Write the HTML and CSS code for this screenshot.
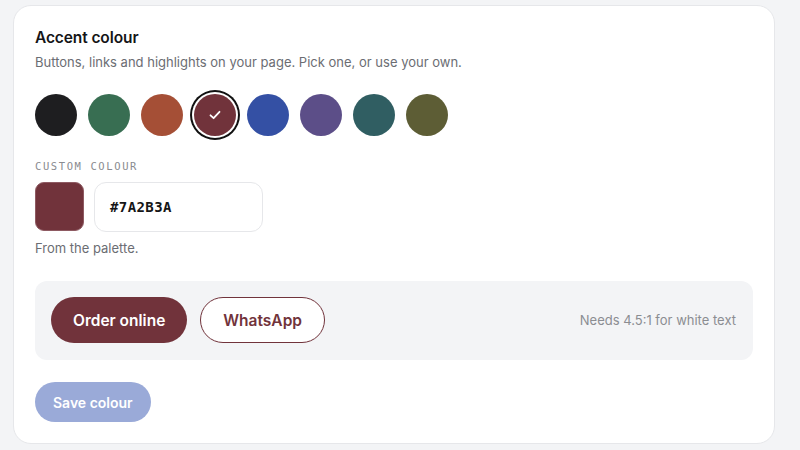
FILE: index.html
```html
<!DOCTYPE html>
<html lang="en">
<head>
    <meta charset="UTF-8">
    <meta name="viewport" content="width=device-width, initial-scale=1.0">
    <title>Accent colour</title>
    <link rel="stylesheet" href="styles.css">
</head>
<body>

    <div class="card">

        <h2 class="titlu">Accent colour</h2>
        <p class="descriere">Buttons, links and highlights on your page. Pick one, or use your own.</p>

        <div class="paleta">
            <div class="bulina" style="background-color: #1e1e20;"></div>
            <div class="bulina" style="background-color: #386e52;"></div>
            <div class="bulina" style="background-color: #a54f36;"></div>
            <div class="bulina selectata" style="background-color: #71333b;">
                <svg width="14" height="14" viewBox="0 0 14 14">
                    <path d="M2.5 7.3 L5.6 10.2 L11.5 3.8" fill="none" stroke="white" stroke-width="1.8" stroke-linecap="round" stroke-linejoin="round"/>
                </svg>
            </div>
            <div class="bulina" style="background-color: #3450a4;"></div>
            <div class="bulina" style="background-color: #5c4e88;"></div>
            <div class="bulina" style="background-color: #305e62;"></div>
            <div class="bulina" style="background-color: #5d5d35;"></div>
        </div>

        <div class="eticheta">CUSTOM COLOUR</div>

        <div class="custom">
            <div class="mostra"></div>
            <div class="camp-hex">#7A2B3A</div>
        </div>

        <p class="nota">From the palette.</p>

        <div class="previzualizare">
            <div class="butoane">
                <span class="buton buton-plin">Order online</span>
                <span class="buton buton-contur">WhatsApp</span>
            </div>
            <span class="contrast">Needs 4.5:1 for white text</span>
        </div>

        <span class="buton-salvare">Save colour</span>

    </div>

</body>
</html>
```

FILE: styles.css
```css
:root {
    --accent: #71333b;
    --border: #e6e7ea;
    --gri-text: #6b6d73;
}

*, *::before, *::after {
    margin: 0;
    padding: 0;
    box-sizing: border-box;
}

body {
    width: 100%;
    height: 100vh;
    background-color: #f3f4f6;
    font-family: Inter, "Noto Sans", sans-serif;
    color: #151517;
    padding: 5px 0 0 13px;
}

.card {
    width: 762px;
    height: 439px;
    background-color: white;
    border: 1px solid var(--border);
    border-radius: 18px;
    padding: 22px 21px;
}

.titlu {
    font-size: 15.5px;
    font-weight: 600;
    line-height: 20px;
    letter-spacing: -0.1px;
}

.descriere {
    margin-top: 5px;
    font-size: 13px;
    line-height: 18px;
    color: var(--gri-text);
}

.paleta {
    display: flex;
    gap: 11px;
    margin-top: 23px;
}

.bulina {
    width: 42px;
    height: 42px;
    border-radius: 50%;
    display: flex;
    justify-content: center;
    align-items: center;
}

.selectata {
    box-shadow: 0 0 0 2px white, 0 0 0 4px #111;
}

.eticheta {
    margin-top: 23px;
    font-family: "DejaVu Sans Mono", monospace;
    font-size: 10.5px;
    letter-spacing: 1.6px;
    line-height: 14px;
    color: #8a8b90;
}

.custom {
    display: flex;
    gap: 10px;
    margin-top: 9px;
}

.mostra {
    width: 49px;
    height: 49px;
    border-radius: 9px;
    background-color: var(--accent);
    border: 1px solid #8e5a62;
}

.camp-hex {
    width: 169px;
    height: 50px;
    border: 1px solid var(--border);
    border-radius: 12px;
    display: flex;
    align-items: center;
    padding-left: 15px;
    font-family: "DejaVu Sans Mono", monospace;
    font-size: 14px;
    font-weight: 600;
    letter-spacing: 0.4px;
    color: #151517;
}

.nota {
    margin-top: 7px;
    font-size: 13px;
    line-height: 18px;
    color: var(--gri-text);
}

.previzualizare {
    margin-top: 24px;
    background-color: #f3f4f6;
    border-radius: 12px;
    padding: 16px 17px 17px 16px;
    display: flex;
    justify-content: space-between;
    align-items: center;
}

.butoane {
    display: flex;
    gap: 13px;
}

.buton {
    height: 46px;
    border-radius: 23px;
    display: flex;
    align-items: center;
    padding: 0 22px;
    font-size: 15.5px;
    font-weight: 600;
}

.buton-plin {
    background-color: var(--accent);
    color: white;
}

.buton-contur {
    background-color: white;
    border: 1px solid var(--accent);
    color: var(--accent);
}

.contrast {
    font-size: 13px;
    color: #8b8d92;
}

.buton-salvare {
    display: inline-flex;
    align-items: center;
    margin-top: 22px;
    height: 40px;
    padding: 0 18px;
    border-radius: 20px;
    background-color: #9aaad8;
    color: white;
    font-size: 14px;
    font-weight: 600;
}
```
